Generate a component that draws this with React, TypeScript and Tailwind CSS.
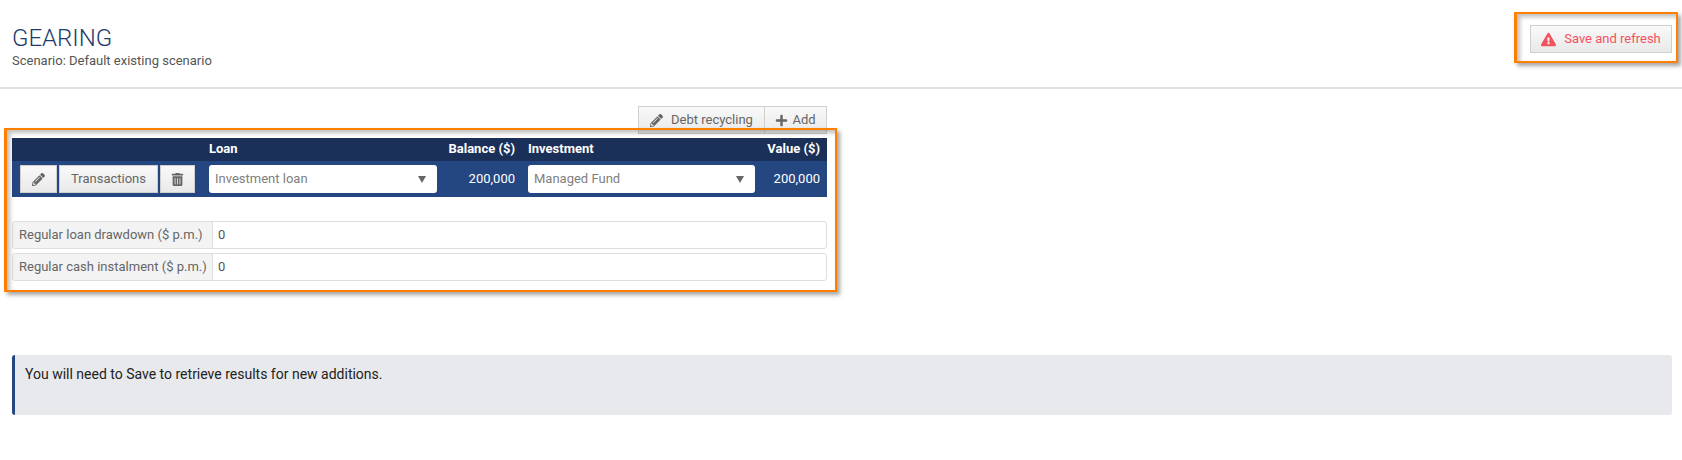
import React from "react";
import { FaPencilAlt, FaPlus, FaTrashAlt, FaExclamationTriangle } from "react-icons/fa";

const btn =
  "flex items-center justify-center h-[28px] border border-[#cfcfcf] bg-gradient-to-b from-[#f9f9f9] to-[#e9e9e9] text-[#666] text-[13px]";

function Select({ label, width }: { label: string; width: string }) {
  return (
    <div className={`flex items-center justify-between h-[28px] rounded-[3px] bg-white pl-[6px] pr-[11px] text-[13px] text-[#808080] ${width}`}>
      <span className="pb-[1px]">{label}</span>
      <span className="w-0 h-0 border-x-[4px] border-x-transparent border-t-[7px] border-t-[#666]" />
    </div>
  );
}

function InputRow({ label }: { label: string }) {
  return (
    <div className="flex h-[28px] rounded-[3px] border border-[#dedede] text-[13px]">
      <div className="flex items-center w-[200px] shrink-0 pl-[6px] pb-[1px] bg-[#f3f3f3] border-r border-[#dedede] text-[#666] rounded-l-[3px]">
        {label}
      </div>
      <div className="flex items-center pl-[5px] text-[#555]">0</div>
    </div>
  );
}

export default function App() {
  return (
    <div className="relative w-[1682px] h-[460px] bg-white overflow-hidden font-['Roboto',sans-serif]">
      <header className="relative flex h-[89px] border-b-2 border-[#e2e2e2] pl-[12px] pr-[10px]">
        <div className="pt-[25px]">
          <h1 className="text-[24px] leading-[26px] font-light text-[#23396b]">GEARING</h1>
          <p className="text-[13px] leading-[16px] mt-[2px] text-[#555]">Scenario: Default existing scenario</p>
        </div>
        <div className="ml-auto pt-[25px]">
          <button className={`${btn} w-[142px] gap-[8px]`}>
            <FaExclamationTriangle className="text-[15px] text-[#f4515f]" />
            <span className="text-[#f4515f]">Save and refresh</span>
          </button>
        </div>
      </header>

      <main className="w-[839px] pl-[12px] pr-[12px] pt-[17px]">
        <div className="flex justify-end">
          <button className={`${btn} w-[127px] gap-[8px]`}>
            <FaPencilAlt className="text-[13px] text-[#666]" />
            Debt recycling
          </button>
          <button className={`${btn} w-[63px] -ml-px gap-[4px]`}>
            <FaPlus className="text-[13px] text-[#666]" />
            Add
          </button>
        </div>

        <div className="flex items-center h-[23px] mt-[4px] pb-[1px] bg-[#1b3059] text-white text-[13px] font-bold">
          <span className="ml-[197px] w-[228px]">Loan</span>
          <span className="w-[78px] text-right">Balance ($)</span>
          <span className="ml-[13px] w-[227px]">Investment</span>
          <span className="w-[65px] text-right">Value ($)</span>
        </div>
        <div className="flex items-center h-[36px] bg-[#254781] text-white text-[13px]">
          <button className={`${btn} ml-[8px] w-[37px]`}>
            <FaPencilAlt className="text-[13px] text-[#666]" />
          </button>
          <button className={`${btn} ml-[2px] w-[99px]`}>Transactions</button>
          <button className={`${btn} ml-[2px] w-[35px]`}>
            <FaTrashAlt className="text-[13px] text-[#666]" />
          </button>
          <div className="ml-[14px]">
            <Select label="Investment loan" width="w-[228px]" />
          </div>
          <span className="w-[78px] text-right">200,000</span>
          <div className="ml-[13px]">
            <Select label="Managed Fund" width="w-[227px]" />
          </div>
          <span className="w-[65px] text-right">200,000</span>
        </div>

        <div className="flex flex-col gap-[4px] mt-[24px]">
          <InputRow label="Regular loan drawdown ($ p.m.)" />
          <InputRow label="Regular cash instalment ($ p.m.)" />
        </div>
      </main>

      <div className="ml-[12px] mt-[74px] mr-[10px] h-[60px] rounded-[3px] bg-[#e8e9ec] border-l-[3px] border-[#254781] pl-[10px] pt-[11px] text-[14px] leading-[16px] text-[#222]">
        You will need to Save to retrieve results for new additions.
      </div>

      {/* annotation boxes from the screenshot */}
      <div className="absolute left-[4px] top-[128px] w-[833px] h-[164px] border-[2px] border-l-[3px] border-[#ff7f00] shadow-[3px_3px_4px_rgba(0,0,0,0.35),inset_3px_3px_4px_rgba(0,0,0,0.25)] pointer-events-none" />
      <div className="absolute left-[1514px] top-[12px] w-[164px] h-[51px] border-[2px] border-l-[3px] border-[#ff7f00] shadow-[3px_3px_4px_rgba(0,0,0,0.35),inset_3px_3px_4px_rgba(0,0,0,0.25)] pointer-events-none" />
    </div>
  );
}
